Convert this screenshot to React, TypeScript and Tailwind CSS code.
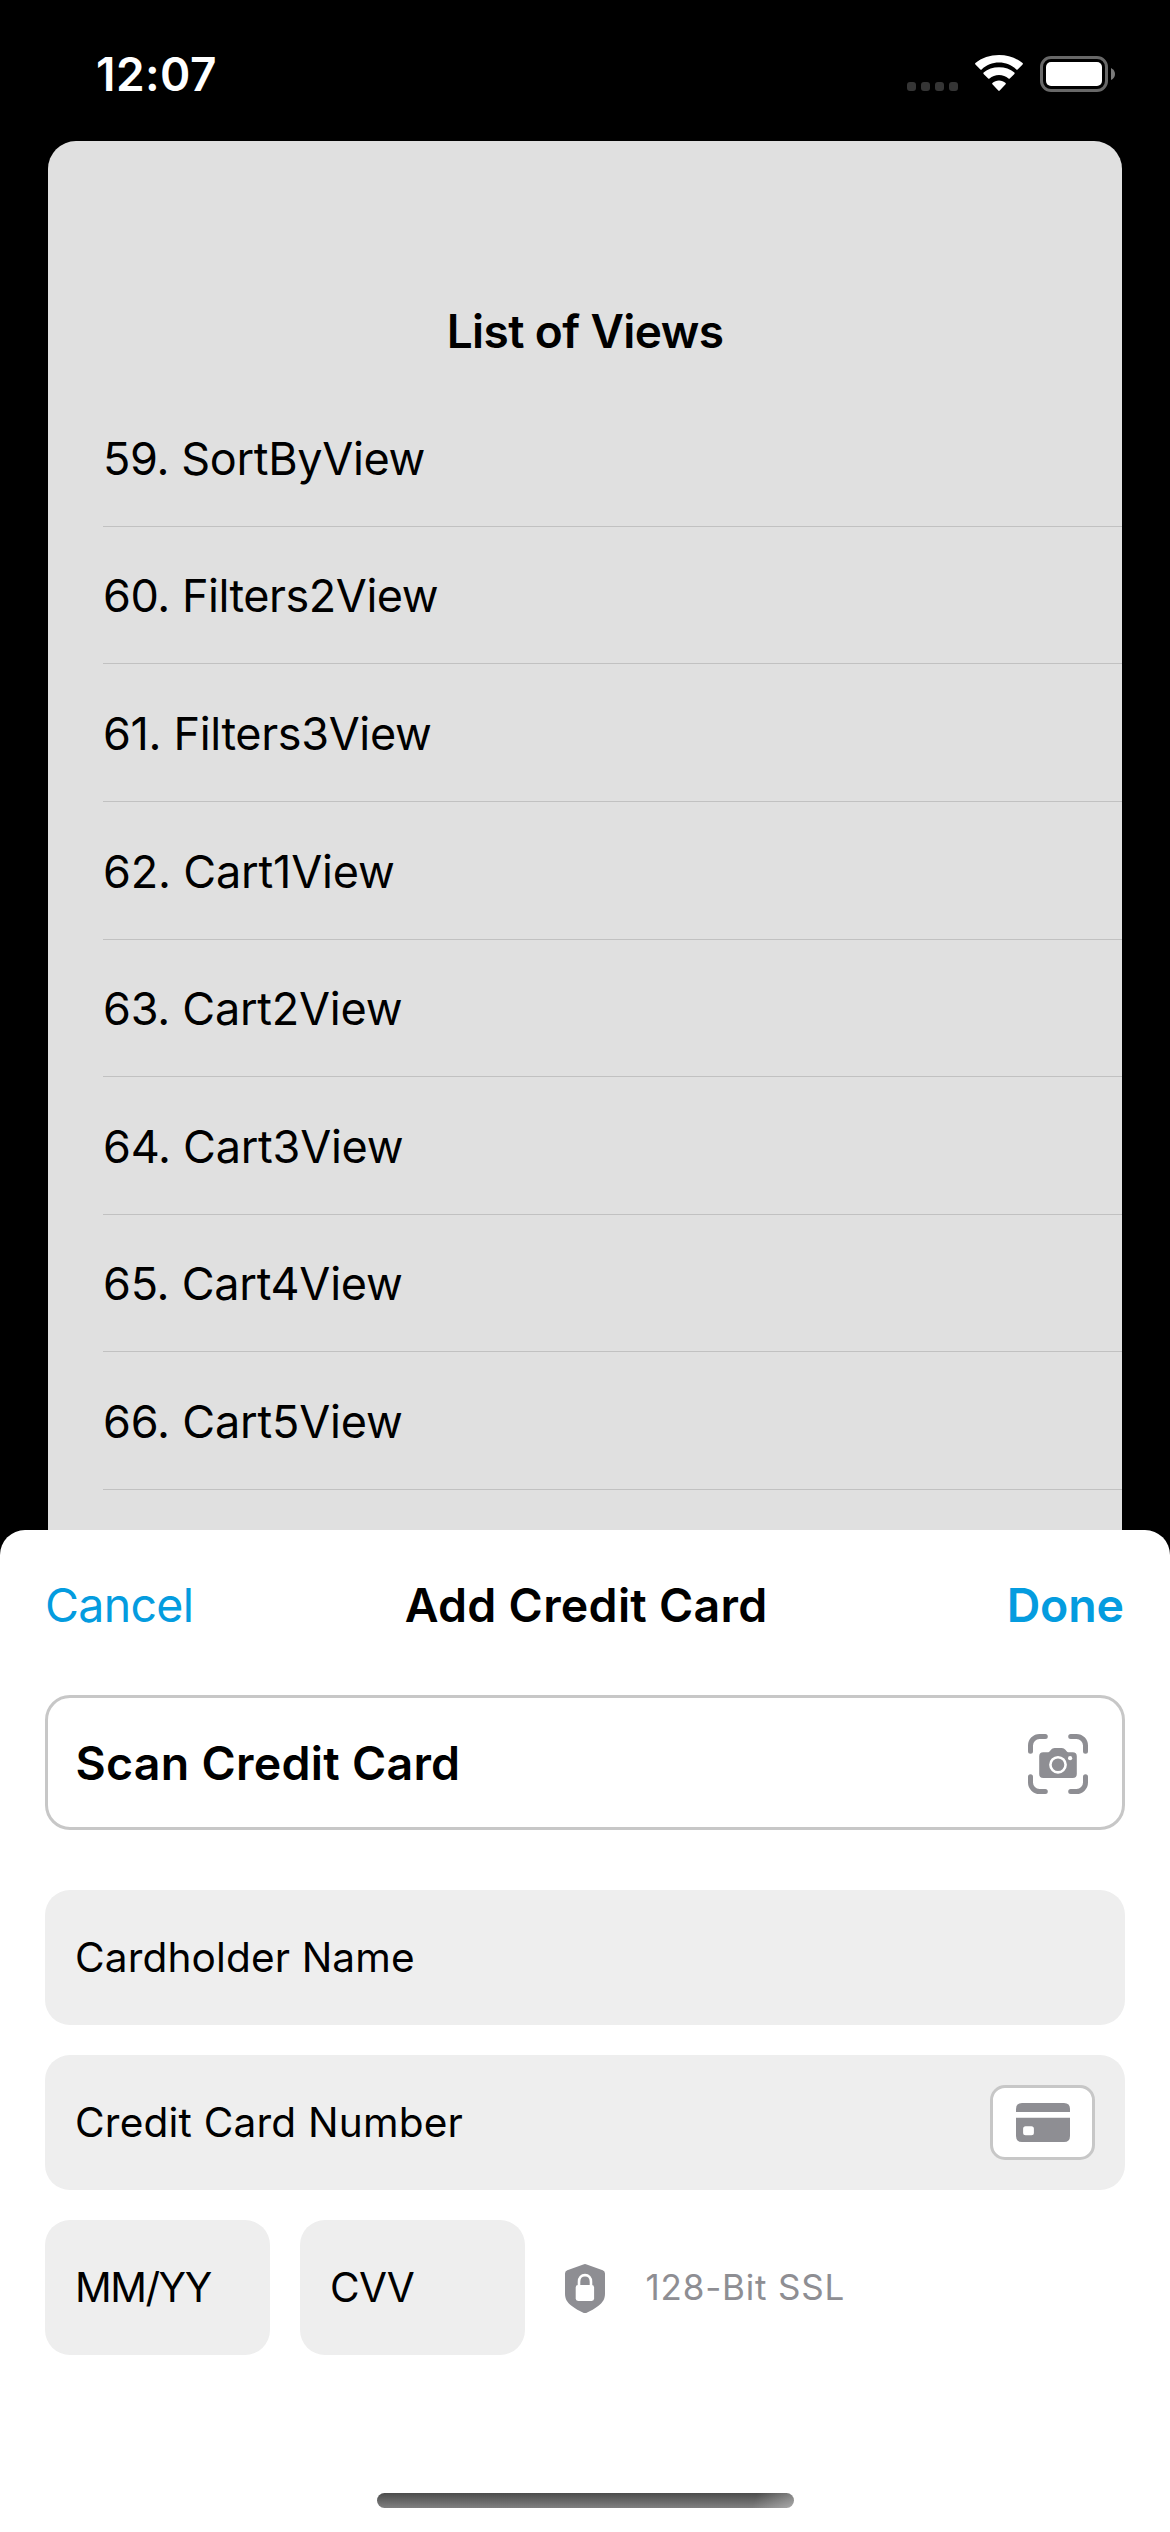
const views = [
  { name: "59. SortByView", tracking: "tracking-[-0.35px]" },
  { name: "60. Filters2View", tracking: "tracking-[-0.47px]" },
  { name: "61. Filters3View", tracking: "tracking-[-0.35px]" },
  { name: "62. Cart1View", tracking: "tracking-[-0.18px]" },
  { name: "63. Cart2View", tracking: "tracking-[-0.25px]" },
  { name: "64. Cart3View", tracking: "tracking-[-0.25px]" },
  { name: "65. Cart4View", tracking: "tracking-[-0.25px]" },
  { name: "66. Cart5View", tracking: "tracking-[-0.18px]" },
];

function WifiIcon() {
  return (
    <svg className="h-[36px] w-[48px]" viewBox="0 0 48 36" fill="#fff">
      <path d="M24 7.6c6.6 0 12.700 2.500 17.300 6.800.4.4 1 .4 1.300 0l5-5c.4-.4.4-1 0-1.400C41.200 2.900 32.900 0 24 0S6.800 2.900.4 8c-.4.400-.4 1 0 1.400l5 5c.3.4.9.4 1.300 0C11.300 10.100 17.400 7.600 24 7.600Z" />
      <path d="M24 20c3.600 0 6.900 1.300 9.500 3.600.4.3.9.3 1.300 0l4.600-4.700c.4-.4.4-1 0-1.400C35.300 14.200 29.900 12.300 24 12.300s-11.300 1.900-15.400 5.200c-.4.4-.4 1 0 1.400l4.600 4.700c.4.3.9.3 1.300 0C17.100 21.300 20.400 20 24 20Z" />
      <path d="M30.600 27.900c.4.400.4.900 0 1.300L24.700 35.600c-.4.400-1 .4-1.400 0l-5.900-6.400c-.4-.4-.4-.9 0-1.300 1.800-1.500 4.100-2.400 6.600-2.400s4.800.9 6.600 2.400Z" />
    </svg>
  );
}

function ScanCameraIcon() {
  return (
    <svg className="h-[60px] w-[60px]" viewBox="0 0 60 60" fill="none">
      <path
        d="M2.500 17.200V11.500a9 9 0 0 1 9-9h5.800M42.700 2.500h5.800a9 9 0 0 1 9 9v5.700M57.500 42.800v5.700a9 9 0 0 1-9 9h-5.800M17.300 57.500h-5.800a9 9 0 0 1-9-9v-5.700"
        stroke="#8e8e93"
        strokeWidth="5"
        strokeLinecap="round"
      />
      <path
        d="M11.200 22.300q0-4.100 4.100-4.100h4.200c1.200 0 1.800-.3 2.500-1.200l1-1.300q1.300-1.700 3.600-1.700h7.200q2.300 0 3.600 1.700l1 1.300c.7.900 1.300 1.200 2.500 1.200h3.800q4.100 0 4.100 4.100v17.600q0 4.100-4.100 4.100H15.300q-4.100 0-4.100-4.100Z"
        fill="#8e8e93"
      />
      <circle cx="30" cy="30.800" r="7.600" stroke="#fff" strokeWidth="2.600" />
      <circle cx="42.100" cy="24.200" r="2.100" fill="#fff" />
    </svg>
  );
}

function CreditCardIcon() {
  return (
    <svg className="h-[39px] w-[54px]" viewBox="0 0 54 39" fill="#8e8e93">
      <path d="M0 9V6Q0 0 6 0h42q6 0 6 6v3Z" />
      <path
        fillRule="evenodd"
        d="M0 14.700h54V33q0 6-6 6H6q-6 0-6-6ZM9.600 23.300q-2.500 0-2.500 2.500v3.900q0 2.500 2.500 2.500h5.800q2.500 0 2.500-2.500v-3.900q0-2.500-2.500-2.500Z"
      />
    </svg>
  );
}

function ShieldIcon() {
  return (
    <svg className="h-[49px] w-[40px]" viewBox="0 0 40 49" fill="none">
      <path
        d="M18.300.5q1.700-.8 3.400 0l16 5.700Q40 7.100 40 9.500V29.500c0 5.500-2.200 8.800-6.500 12.200-3.600 2.800-8 5.300-11.800 7q-1.700.7-3.400 0c-3.800-1.700-8.200-4.200-11.800-7C2.200 38.300 0 35 0 29.500V9.500Q0 7.100 2.300 6.200Z"
        fill="#8e8e93"
      />
      <path d="M14 22.500v-4.700c0-4 2.400-6.700 6-6.700s6 2.700 6 6.700v4.700" stroke="#fff" strokeWidth="2.600" />
      <rect x="10.700" y="21" width="18.400" height="16" rx="2.400" fill="#fff" />
    </svg>
  );
}

export default function App() {
  return (
    <div className="flex h-[2532px] w-[1170px] flex-col overflow-hidden bg-black font-['Inter',sans-serif] text-black">
      <header className="flex h-[141px] shrink-0 items-start justify-between pr-[55px] pl-[96px]">
        <span className="mt-[44px] text-[46px] leading-[60px] font-semibold tracking-[0.44px] text-white">12:07</span>
        <div className="mt-[55px] flex h-[38px] items-start">
          <div className="mt-[27px] flex gap-[5px]">
            {[0, 1, 2, 3].map((dot) => (
              <span key={dot} className="size-[9px] rounded-[3px] bg-[#353535]" />
            ))}
          </div>
          <div className="ml-[17px]">
            <WifiIcon />
          </div>
          <div className="mt-px ml-[17px] flex items-center gap-[3px]">
            <div className="h-[36px] w-[68px] rounded-[11px] border-[3px] border-[#686868] p-[3px]">
              <div className="h-full w-full rounded-[5px] bg-white" />
            </div>
            <svg className="h-[12px] w-[4px]" viewBox="0 0 4 12">
              <path d="M0 0q4 2 4 6t-4 6Z" fill="#7a7a7a" />
            </svg>
          </div>
        </div>
      </header>

      <section className="mx-[48px] flex h-[1389px] shrink-0 flex-col rounded-t-[28px] bg-[#e0e0e0]">
        <h1 className="h-[248.200px] pt-[160px] text-center text-[46px] leading-[60px] font-semibold tracking-[-0.6px]">
          List of Views
        </h1>
        <ul className="ml-[55px]">
          {views.map((view) => (
            <li
              key={view.name}
              className={`flex h-[137.600px] items-center border-b border-[#c1c1c1] pt-[2px] text-[45px] ${view.tracking}`}
            >
              {view.name}
            </li>
          ))}
        </ul>
      </section>

      <div className="bg-[linear-gradient(to_bottom,#000_0,#000_60px,#fff_60px)]">
        <main className="flex h-[1002px] flex-col items-center rounded-t-[25px] bg-white">
          <nav className="grid h-[165px] w-full grid-cols-3 items-center pr-[46px] pl-[45px] pb-[15px] text-[46.500px] leading-[60px] whitespace-nowrap">
            <button className="text-left tracking-[-0.72px] text-[#049cdf]">Cancel</button>
            <h2 className="text-center font-semibold tracking-[0.27px]">Add Credit Card</h2>
            <button className="text-right font-semibold tracking-[-0.12px] text-[#049cdf]">Done</button>
          </nav>

          <button className="flex h-[135px] w-[1080px] items-center justify-between rounded-[25px] border-[3px] border-[#c7c7c7] pr-[34px] pl-[27.500px] text-[46.500px] font-semibold tracking-[0.27px]">
            <span className="pt-[2px]">Scan Credit Card</span>
            <span className="pt-[3px]">
              <ScanCameraIcon />
            </span>
          </button>

          <form className="mt-[60px] flex w-[1080px] flex-col gap-[30px] text-[40.600px]">
            <div className="flex h-[135px] items-center rounded-[25px] bg-[#eeeeee] pt-[2px] pl-[30px] tracking-[0.13px]">
              Cardholder Name
            </div>
            <div className="flex h-[135px] items-center justify-between rounded-[25px] bg-[#eeeeee] pr-[30px] pl-[30px] tracking-[0.2px]">
              <span className="pt-[2px]">Credit Card Number</span>
              <span className="flex h-[75px] w-[105px] items-center justify-center rounded-[15px] border-[3px] border-[#c7c7c7] bg-white">
                <CreditCardIcon />
              </span>
            </div>
            <div className="flex items-center">
              <div className="flex h-[135px] w-[225px] items-center rounded-[25px] bg-[#eeeeee] pt-px pl-[30px] tracking-[-1.45px]">
                MM/YY
              </div>
              <div className="ml-[30px] flex h-[135px] w-[225px] items-center rounded-[25px] bg-[#eeeeee] pt-px pl-[30px] tracking-[-0.76px]">
                CVV
              </div>
              <span className="ml-[40px] pt-[2px]">
                <ShieldIcon />
              </span>
              <span className="ml-[40.500px] text-[35px] tracking-[0.8px] text-[#8e8e93]">128-Bit SSL</span>
            </div>
          </form>

          <div className="mt-[138px] h-[15px] w-[417px] rounded-full bg-[linear-gradient(110deg,transparent_90%,#ffffff55_100%),linear-gradient(to_bottom,#4c4c4c,#808080)]" />
        </main>
      </div>
    </div>
  );
}
